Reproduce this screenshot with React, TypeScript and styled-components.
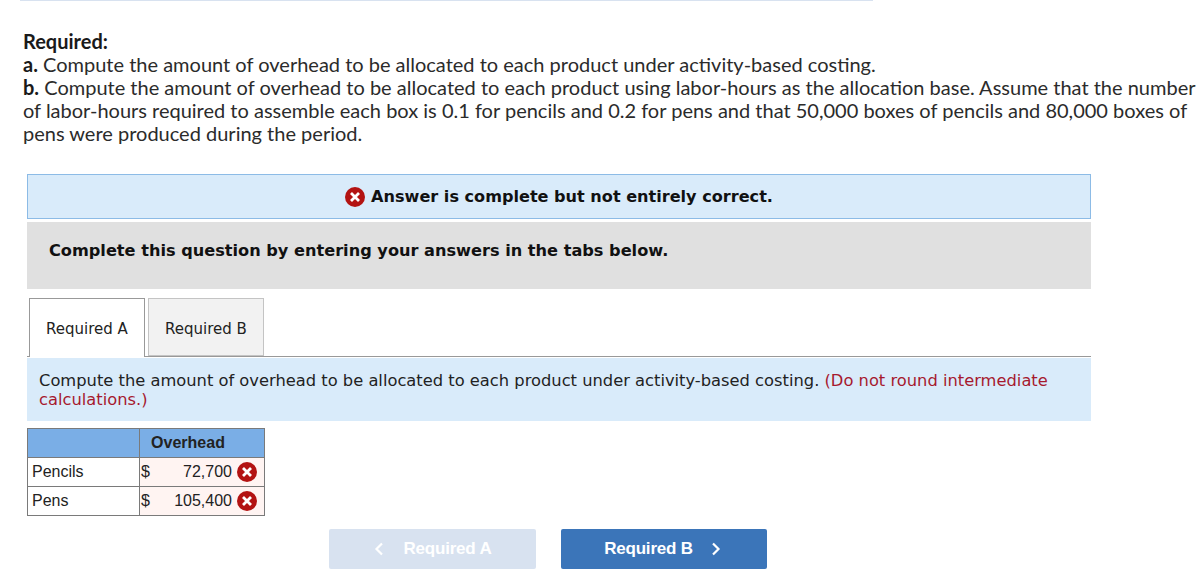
import React from "react";
import styled, { createGlobalStyle } from "styled-components";

const Global = createGlobalStyle`
  html, body { margin: 0; padding: 0; background: #fff; }
  body { width: 1198px; height: 579px; overflow: hidden; }
`;
const Page = styled.div`
  width: 1198px;
  height: 579px;
  display: flex;
  flex-direction: column;
  overflow: hidden;
`;
const TopRule = styled.div`
  width: 853px;
  height: 1px;
  margin-left: 20px;
  background: #d8e2f0;
`;
const Question = styled.div`
  margin: 29px 0 0 23px;
  font-family: "Lato", "Liberation Sans", sans-serif;
  font-size: 20px;
  line-height: 23px;
  color: #2b2b2b;
  white-space: nowrap;
`;
const Strong = styled.b`
  font-weight: 700;
  color: #1a1a1a;
`;
const Notice = styled.div`
  box-sizing: border-box;
  width: 1064px;
  height: 45px;
  margin: 29px 0 0 27px;
  background: #d9ebfa;
  border: 1px solid #8cbbe6;
  display: flex;
  align-items: center;
  justify-content: center;
  gap: 6px;
  font: 700 16.1px "DejaVu Sans", Verdana, sans-serif;
  color: #111;
`;
const Instruction = styled.div`
  box-sizing: border-box;
  width: 1064px;
  height: 67px;
  margin: 3px 0 0 27px;
  padding: 18px 0 0 22px;
  background: #e0e0e0;
  font: 700 16.16px/22px "DejaVu Sans", Verdana, sans-serif;
  color: #111;
`;
const TabBar = styled.div`
  width: 1064px;
  height: 59px;
  margin: 9px 0 0 27px;
  box-sizing: border-box;
  padding-left: 2px;
  border-bottom: 1px solid #999;
  display: flex;
  gap: 3px;
`;
const Tab = styled.div<{ $active?: boolean }>`
  box-sizing: border-box;
  width: 116px;
  height: ${(p) => (p.$active ? "59px" : "58px")};
  padding-top: ${(p) => (p.$active ? "2px" : "3px")};
  border: 1px solid ${(p) => (p.$active ? "#999" : "#c4c4c4")};
  border-bottom: ${(p) => (p.$active ? "none" : "1px solid #c4c4c4")};
  background: ${(p) => (p.$active ? "#fff" : "#f2f2f2")};
  display: flex;
  align-items: center;
  justify-content: center;
  font: 15px "DejaVu Sans", Verdana, sans-serif;
  color: #222;
`;
const Prompt = styled.div`
  box-sizing: border-box;
  width: 1064px;
  height: 63px;
  margin: 1px 0 0 27px;
  padding: 13px 12px 0 12px;
  background: #d9ebfa;
  font: 16.31px/19px "DejaVu Sans", Verdana, sans-serif;
  color: #222;
`;
const Hint = styled.span`
  color: #a6192e;
`;
const Table = styled.table`
  width: 238px;
  height: 88px;
  margin: 7px 0 0 27px;
  border-collapse: collapse;
  table-layout: fixed;
  font: 16px "Liberation Sans", Arial, sans-serif;
  color: #222;
`;
const CornerCell = styled.th`
  width: 111px;
  height: 28px;
  padding: 0;
  background: #7aaee6;
  border: 1px solid #7a7a7a;
`;
const ColumnHead = styled.th`
  height: 28px;
  padding: 0 28px 0 0;
  background: #7aaee6;
  border: 1px solid #7a7a7a;
  font-weight: 700;
  text-align: center;
`;
const LabelCell = styled.td`
  height: 28px;
  padding: 0 0 0 4px;
  border: 1px solid #7a7a7a;
`;
const ValueCell = styled.td`
  height: 28px;
  padding: 0 7px 0 1px;
  background: #fff4f2;
  border: 1px solid #7a7a7a;
`;
const Amount = styled.div`
  display: flex;
  align-items: center;
`;
const Figure = styled.span`
  margin-left: auto;
  margin-right: 5px;
`;
const Pager = styled.div`
  display: flex;
  gap: 25px;
  margin: 13px 0 0 329px;
`;
const PagerButton = styled.div<{ $disabled?: boolean; $w: number }>`
  box-sizing: border-box;
  width: ${(p) => p.$w}px;
  height: 40px;
  padding: ${(p) => (p.$disabled ? "0 0 0 1px" : "0 3px 0 0")};
  border-radius: 2px;
  background: ${(p) => (p.$disabled ? "#d8e2f0" : "#3b75b9")};
  color: #fff;
  display: flex;
  align-items: center;
  justify-content: center;
  gap: ${(p) => (p.$disabled ? "19px" : "18px")};
  font: 700 17px "Liberation Sans", Arial, sans-serif;
  letter-spacing: -0.2px;
`;

const Cross = ({ size }: { size: number }) => (
  <svg width={size} height={size} viewBox="0 0 20 20" style={{ flex: "none" }}>
    <circle cx="10" cy="10" r="10" fill="#b31312" />
    <path d="M6 6l8 8M14 6l-8 8" stroke="#fff" strokeWidth="2.8" strokeLinecap="butt" />
  </svg>
);
const Chevron = ({ dir }: { dir: "left" | "right" }) => (
  <svg width="10" height="14" viewBox="0 0 10 14" style={{ flex: "none" }}>
    <path d={dir === "left" ? "M8 1.5L2.5 7L8 12.5" : "M2 1.5L7.5 7L2 12.5"} fill="none" stroke="#fff" strokeWidth="2.2" />
  </svg>
);

export default function App() {
  return (
    <Page>
      <Global />
      <TopRule />
      <Question>
        <Strong>Required:</Strong>
        <br />
        <Strong>a.</Strong> Compute the amount of overhead to be allocated to each product under activity-based costing.
        <br />
        <Strong>b.</Strong> Compute the amount of overhead to be allocated to each product using labor-hours as the allocation base. Assume that the number
        <br />
        of labor-hours required to assemble each box is 0.1 for pencils and 0.2 for pens and that 50,000 boxes of pencils and 80,000 boxes of
        <br />
        pens were produced during the period.
      </Question>
      <Notice>
        <Cross size={20} />
        Answer is complete but not entirely correct.
      </Notice>
      <Instruction>Complete this question by entering your answers in the tabs below.</Instruction>
      <TabBar>
        <Tab $active>Required A</Tab>
        <Tab>Required B</Tab>
      </TabBar>
      <Prompt>
        Compute the amount of overhead to be allocated to each product under activity-based costing. <Hint>(Do not round intermediate calculations.)</Hint>
      </Prompt>
      <Table>
        <thead>
          <tr>
            <CornerCell />
            <ColumnHead>Overhead</ColumnHead>
          </tr>
        </thead>
        <tbody>
          <tr>
            <LabelCell>Pencils</LabelCell>
            <ValueCell>
              <Amount>$<Figure>72,700</Figure><Cross size={20} /></Amount>
            </ValueCell>
          </tr>
          <tr>
            <LabelCell>Pens</LabelCell>
            <ValueCell>
              <Amount>$<Figure>105,400</Figure><Cross size={20} /></Amount>
            </ValueCell>
          </tr>
        </tbody>
      </Table>
      <Pager>
        <PagerButton $disabled $w={207}>
          <Chevron dir="left" />
          Required A
        </PagerButton>
        <PagerButton $w={206}>
          Required B
          <Chevron dir="right" />
        </PagerButton>
      </Pager>
    </Page>
  );
}
